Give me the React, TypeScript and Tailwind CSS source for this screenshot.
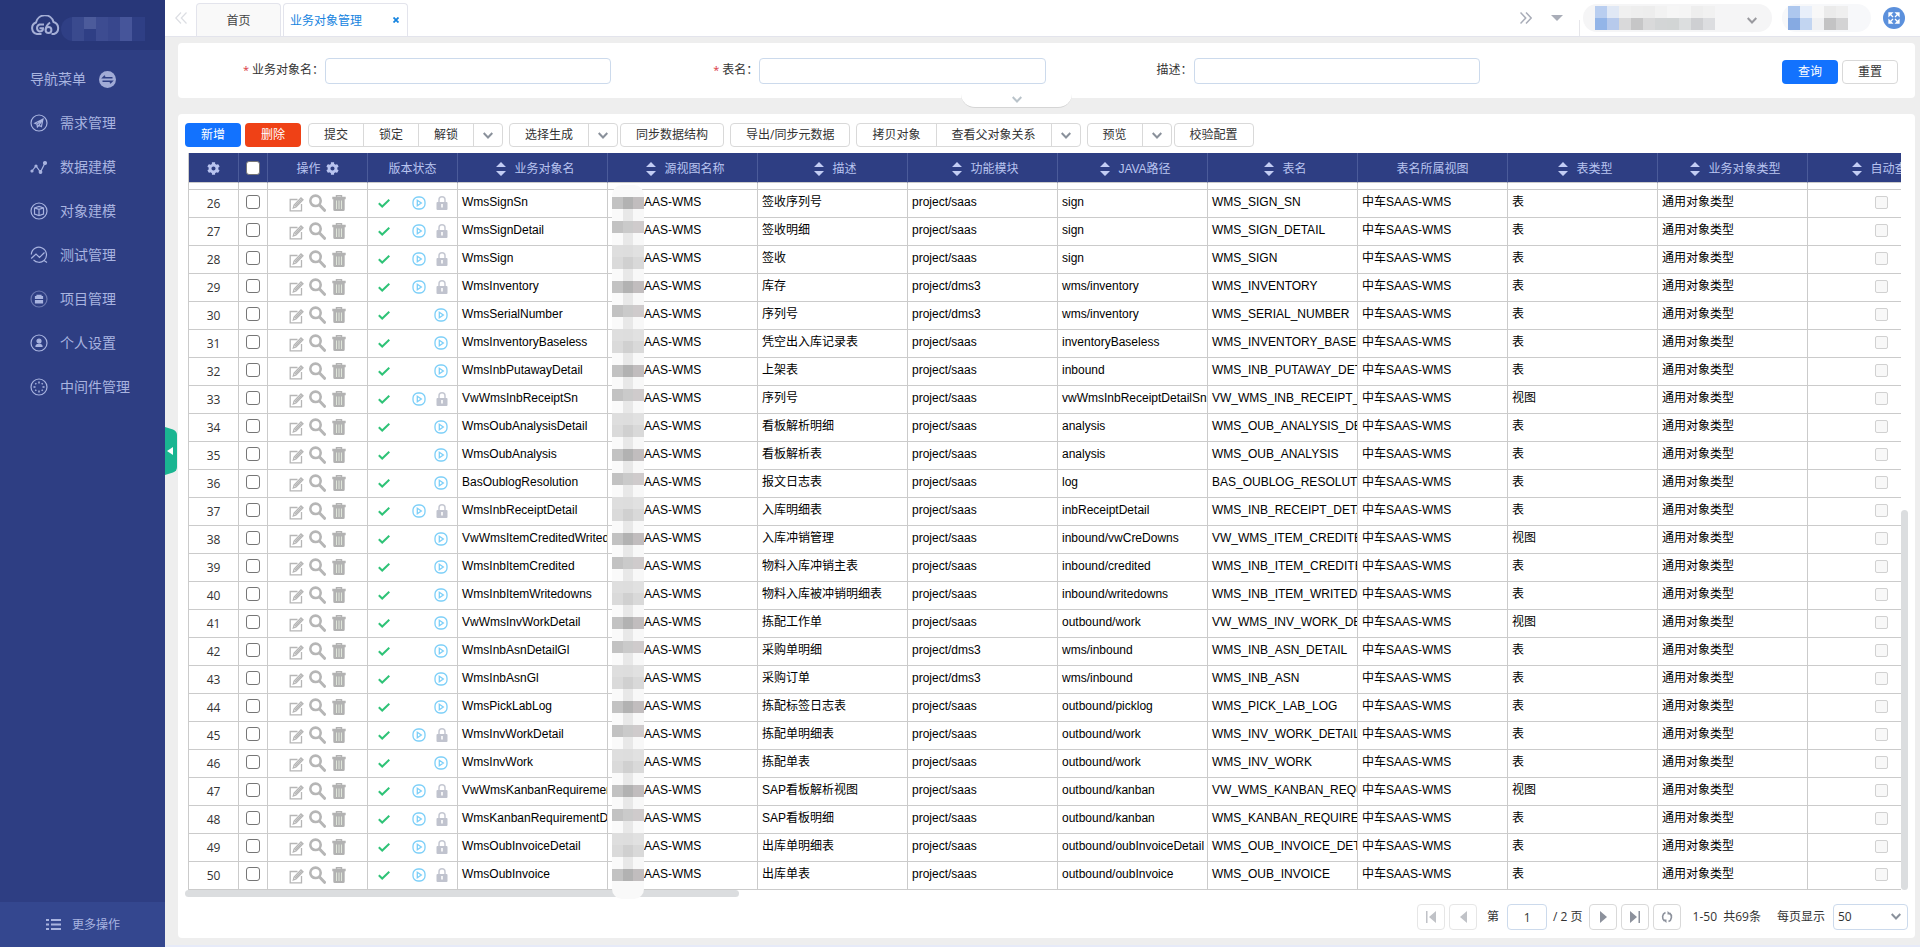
import React, { useState } from 'react';
import { FaCog } from 'react-icons/fa';

interface BizObject {
  no: number;
  name: string;
  desc: string;
  module: string;
  path: string;
  table: string;
  type: string;
  locked: boolean;
}

const raw: [string, string, string, string, string, string, boolean][] = [
  ['WmsSignSn', '签收序列号', 'project/saas', 'sign', 'WMS_SIGN_SN', '表', true],
  ['WmsSignDetail', '签收明细', 'project/saas', 'sign', 'WMS_SIGN_DETAIL', '表', true],
  ['WmsSign', '签收', 'project/saas', 'sign', 'WMS_SIGN', '表', true],
  ['WmsInventory', '库存', 'project/dms3', 'wms/inventory', 'WMS_INVENTORY', '表', true],
  ['WmsSerialNumber', '序列号', 'project/dms3', 'wms/inventory', 'WMS_SERIAL_NUMBER', '表', false],
  ['WmsInventoryBaseless', '凭空出入库记录表', 'project/saas', 'inventoryBaseless', 'WMS_INVENTORY_BASELESS', '表', false],
  ['WmsInbPutawayDetail', '上架表', 'project/saas', 'inbound', 'WMS_INB_PUTAWAY_DETAIL', '表', false],
  ['VwWmsInbReceiptSn', '序列号', 'project/saas', 'vwWmsInbReceiptDetailSn', 'VW_WMS_INB_RECEIPT_SN', '视图', true],
  ['WmsOubAnalysisDetail', '看板解析明细', 'project/saas', 'analysis', 'WMS_OUB_ANALYSIS_DETAIL', '表', false],
  ['WmsOubAnalysis', '看板解析表', 'project/saas', 'analysis', 'WMS_OUB_ANALYSIS', '表', false],
  ['BasOublogResolution', '报文日志表', 'project/saas', 'log', 'BAS_OUBLOG_RESOLUTION', '表', false],
  ['WmsInbReceiptDetail', '入库明细表', 'project/saas', 'inbReceiptDetail', 'WMS_INB_RECEIPT_DETAIL', '表', true],
  ['VwWmsItemCreditedWritedowns', '入库冲销管理', 'project/saas', 'inbound/vwCreDowns', 'VW_WMS_ITEM_CREDITED', '视图', false],
  ['WmsInbItemCredited', '物料入库冲销主表', 'project/saas', 'inbound/credited', 'WMS_INB_ITEM_CREDITED', '表', false],
  ['WmsInbItemWritedowns', '物料入库被冲销明细表', 'project/saas', 'inbound/writedowns', 'WMS_INB_ITEM_WRITEDOWNS', '表', false],
  ['VwWmsInvWorkDetail', '拣配工作单', 'project/saas', 'outbound/work', 'VW_WMS_INV_WORK_DETAIL', '视图', false],
  ['WmsInbAsnDetailGl', '采购单明细', 'project/dms3', 'wms/inbound', 'WMS_INB_ASN_DETAIL', '表', false],
  ['WmsInbAsnGl', '采购订单', 'project/dms3', 'wms/inbound', 'WMS_INB_ASN', '表', false],
  ['WmsPickLabLog', '拣配标签日志表', 'project/saas', 'outbound/picklog', 'WMS_PICK_LAB_LOG', '表', false],
  ['WmsInvWorkDetail', '拣配单明细表', 'project/saas', 'outbound/work', 'WMS_INV_WORK_DETAIL', '表', true],
  ['WmsInvWork', '拣配单表', 'project/saas', 'outbound/work', 'WMS_INV_WORK', '表', false],
  ['VwWmsKanbanRequirement', 'SAP看板解析视图', 'project/saas', 'outbound/kanban', 'VW_WMS_KANBAN_REQUIREMENT', '视图', true],
  ['WmsKanbanRequirementDetail', 'SAP看板明细', 'project/saas', 'outbound/kanban', 'WMS_KANBAN_REQUIREMENT', '表', true],
  ['WmsOubInvoiceDetail', '出库单明细表', 'project/saas', 'outbound/oubInvoiceDetail', 'WMS_OUB_INVOICE_DETAIL', '表', true],
  ['WmsOubInvoice', '出库单表', 'project/saas', 'outbound/oubInvoice', 'WMS_OUB_INVOICE', '表', true],
];

const rows: BizObject[] = raw.map(([name, desc, module, path, table, type, locked], i) => ({
  no: 26 + i, name, desc, module, path, table, type, locked,
}));

const columns = [
  { title: '业务对象名', sort: true },
  { title: '源视图名称', sort: true },
  { title: '描述', sort: true },
  { title: '功能模块', sort: true },
  { title: 'JAVA路径', sort: true },
  { title: '表名', sort: true },
  { title: '表名所属视图', sort: false },
  { title: '表类型', sort: true },
  { title: '业务对象类型', sort: true },
  { title: '自动查询', sort: true },
];

// Sidebar icons, all drawn on an 18x18 box
const ring = <circle cx="9" cy="9" r="8" />;
const menu = [
  { label: '需求管理', icon: <>{ring}<path d="M4.8 9.2 13 5l-1.6 7.6-2.6-1.3-1.4 1.6-.4-2.7zM7 10.2 13 5 8.8 11.3" /></> },
  { label: '数据建模', icon: <><path d="M2 13 6 8l4.5 6L15 5" /><circle cx="2" cy="13" r="1" fill="currentColor" /><circle cx="6" cy="8" r="1" fill="currentColor" /><circle cx="10.5" cy="14" r="1.3" fill="currentColor" /><circle cx="15" cy="5" r="1.5" fill="currentColor" /></> },
  { label: '对象建模', icon: <>{ring}<path d="M4.5 6 9 4.5 13.5 6v6L9 13.5 4.5 12zM4.5 6 9 7.3 13.5 6M9 7.3v6.2" /></> },
  { label: '测试管理', icon: <><path d="M1.3 8.5A7.6 7.6 0 1 1 14 14.500l3 2M14 14.500A7.600 7.600 0 0 1 3.500 13.800M1.200 12.500 6 8l3.500 3.500 5-5" /></> },
  { label: '项目管理', icon: <><circle cx="9" cy="9" r="8" opacity="0.5" /><path d="M5.500 8.500v-2h7v2zM5.500 10.700h7V13h-7zM7 6V5.300h4V6" fill="currentColor" /></> },
  { label: '个人设置', icon: <>{ring}<circle cx="9" cy="7" r="2" fill="currentColor" /><path d="M6 12.5c0-3 6-3 6 0z" fill="currentColor" /></> },
  { label: '中间件管理', icon: <>{ring}<path d="M9 3.500v2M9 12.500v2M3.500 9h2M12.500 9h2M5.300 5.300l1 1M11.700 11.700l1 1M5.300 12.700l1-1M11.700 6.300l1-1" strokeWidth="1.500" /></> },
];

// Masked customer prefix: seven 12px bands, three tiles each
const maskBands = [
  ['bg-[#c2c2c2]', 'bg-[#b2b2b2]', 'bg-[#c1bdbe]'],
  ['bg-[#fafafa]', 'bg-[#e8e8e8]', 'bg-[#f8f8f8]'],
  ['bg-[#c2c2c2]', 'bg-[#cacaca]', 'bg-[#cfcbcc]'],
  ['bg-[#fafafa]', 'bg-[#e8e8e8]', 'bg-[#f8f8f8]'],
  ['bg-[#dedede]', 'bg-[#dddddd]', 'bg-[#e1e1e1]'],
  ['bg-[#dadada]', 'bg-[#d0d0d0]', 'bg-[#d9d9d9]'],
  ['bg-[#fafafa]', 'bg-[#e8e8e8]', 'bg-[#f8f8f8]'],
];

const td = 'h-[28px] overflow-hidden whitespace-nowrap border-r border-b border-[#cbcbcb] pl-1 pb-[3px] leading-6';
const th = 'h-[30px] overflow-hidden whitespace-nowrap border-r border-b border-r-[#4b5b9a] border-b-[#cbcbcb] p-0 pt-[2px] font-normal';
const checkbox = 'block mx-auto size-[14px] appearance-none rounded-[3px] border border-[#767676] bg-white checked:bg-[#1677ff]';

function SortIcon() {
  return (
    <svg className="h-[14px] w-[10px]" viewBox="0 0 10 14" fill="#c3cdf4">
      <path d="M5 0 10 5H0zM0 9h10l-5 5z" />
    </svg>
  );
}

function Chevron({ className = 'text-[#8a919b]' }: { className?: string }) {
  return (
    <svg className={`h-[7px] w-[10px] ${className}`} viewBox="0 0 10 7" fill="none" stroke="currentColor" strokeWidth="2">
      <path d="M.7 1 5 5.5 9.3 1" />
    </svg>
  );
}

function EditIcon() {
  return (
    <svg className="mt-[3px] h-[15px] w-[15px]" viewBox="0 0 15 15" fill="none" stroke="#b6b6b6" strokeWidth="1.3">
      <path d="M8.5 2.5H1.2v11.3h11.3V7" />
      <path d="M4.300 11l.8-3L12 1l2 1.800L7 10z" />
      <path d="M6 9.200 12.800 2.200" />
    </svg>
  );
}

function SearchIcon() {
  return (
    <svg className="h-[18px] w-[17px]" viewBox="0 0 17 18" fill="none" stroke="#b6b6b6">
      <circle cx="6.5" cy="6.8" r="5.2" strokeWidth="2.6" />
      <path d="m10.5 11 5 5.3" strokeWidth="3" strokeLinecap="round" />
    </svg>
  );
}

function TrashIcon() {
  return (
    <svg className="h-[16px] w-[14px]" viewBox="0 0 14 16">
      <path d="M4.5 2V.8h5V2" fill="none" stroke="#b2b2b2" strokeWidth="1.4" />
      <path d="M.3 1.8h13.4v2.4H.3zM1.3 4.2h11.4v10.300q0 1.500-1.500 1.500H2.800q-1.500 0-1.500-1.500z" fill="#b2b2b2" />
      <path d="M4.500 5.5V14M7 5.5V14M9.500 5.5V14" stroke="#dfe6da" strokeWidth="1" />
    </svg>
  );
}

function PlayIcon() {
  return (
    <svg className="size-[14px]" viewBox="0 0 14 14" fill="none" stroke="#7ccff8" strokeWidth="1.3">
      <rect x="1" y="1" width="12" height="12" rx="5" />
      <path d="M5.3 4.3 9.3 7l-4 2.7z" />
    </svg>
  );
}

function LockIcon() {
  return (
    <svg className="h-[14px] w-[12px]" viewBox="0 0 12 14">
      <path d="M3 6V3.8a3 3 0 0 1 6 0V6" fill="none" stroke="#c5c8d2" strokeWidth="1.5" />
      <rect x=".5" y="6" width="11" height="8" rx="1" fill="#c0c3ce" />
      <path d="M6 8v3.5" stroke="#fff" strokeWidth="1.6" />
    </svg>
  );
}

function Sidebar() {
  return (
    <aside className="relative flex w-[165px] shrink-0 flex-col bg-[#2e3e83] text-sm text-[#a9b4e0]">
      <div className="flex h-[50px] items-center bg-[#283779] pl-[30px]">
        <svg className="h-[21px] w-[31px] text-[#a5afd6]" viewBox="0 0 31 21" fill="none" stroke="currentColor" strokeWidth="2">
          <path d="M11.5 19H7A6 6 0 0 1 6 7.500 9 9 0 0 1 23.500 7 6.300 6.300 0 0 1 24 19h-2.500" />
          <path d="M14 9.500H9.500a3.700 3.700 0 0 0 0 7c2 0 3.500-.8 3.500-3.300h-3.500" />
          <path d="M20 7.500q-4 3-4.300 7" />
          <circle cx="18.500" cy="15" r="2.900" />
        </svg>
        <div className="mt-2 flex h-6 w-[84px] overflow-hidden rounded-l-full bg-[#2f3f85]">
          <span className="ml-[11px] h-full w-3 bg-[#3a4a8e]" />
          <span className="h-3 w-3 bg-[#4c5b9b]" />
          <span className="h-full w-3 bg-[#3d4c91]" />
          <span className="h-full w-3 bg-[#38478d]" />
          <span className="h-full w-3 bg-[#46559a]" />
        </div>
      </div>
      <div className="flex h-[58px] items-center gap-[13px] pl-[30px]">
        <span>导航菜单</span>
        <svg className="size-[17px]" viewBox="0 0 17 17">
          <circle cx="8.5" cy="8.5" r="8.5" fill="#a1abd6" />
          <path d="M13.5 6.8H4L6 4.8M3.5 10.2H13l-2 2" stroke="#2e3e83" strokeWidth="1.5" fill="none" />
        </svg>
      </div>
      <nav className="-mt-[7px] flex-1">
        {menu.map((item) => (
          <a key={item.label} href="#" className="flex h-11 items-center gap-3 pl-[30px]">
            <svg className="size-[18px]" viewBox="0 0 18 18" fill="none" stroke="currentColor" strokeWidth="1.2">
              {item.icon}
            </svg>
            <span>{item.label}</span>
          </a>
        ))}
      </nav>
      <button className="flex h-[45px] items-center gap-[11px] bg-[#34478f] pl-[46px] text-xs">
        <svg className="h-[11px] w-[15px]" viewBox="0 0 15 11" fill="#a9b4e0">
          <path d="M0 0h3v2H0zM5 0h10v2H5zM0 4.5h3v2H0zM5 4.5h10v2H5zM0 9h3v2H0zM5 9h10v2H5z" />
        </svg>
        更多操作
      </button>
      <button aria-label="收起菜单" className="absolute top-[427px] left-full z-10 h-12 w-3">
        <svg className="h-12 w-3" viewBox="0 0 12 48">
          <path d="M0 0 8 2.5Q12 4 12 8v32q0 4-4 5.5L0 48z" fill="#1ab591" />
          <path d="M8 20v8l-6-4z" fill="#fff" />
        </svg>
      </button>
    </aside>
  );
}

function TopBar() {
  return (
    <header className="flex h-[37px] shrink-0 items-end border-b border-[#e3e4ec] bg-white text-xs">
      <svg className="mb-3 ml-[10px] h-3 w-3" viewBox="0 0 12 12" fill="none" stroke="#dcdee3" strokeWidth="1.2">
        <path d="M6 .5.8 6 6 11.5M11.5.5 6.3 6l5.200 5.5" />
      </svg>
      <button className="ml-[9px] h-[33px] w-[85px] rounded-t border border-b-0 border-[#e3e4ec] bg-[#f9f9f9] pt-px text-[#444]">首页</button>
      <div className="ml-[2px] flex h-[33px] w-[125px] items-center justify-between rounded-t border border-b-0 border-[#e3e4ec] pr-2 pl-[6px] text-[#1684e0]">
        <span className="pt-px">业务对象管理</span>
        <button aria-label="关闭">
          <svg className="size-[6px]" viewBox="0 0 6 6" stroke="#1684e0" strokeWidth="1.8"><path d="m.5.5 5 5m0-5-5 5" /></svg>
        </button>
      </div>
      <div className="ml-auto flex h-full items-center pr-[15px]">
        <svg className="h-3 w-3" viewBox="0 0 12 12" fill="none" stroke="#a9adb8" strokeWidth="1.5">
          <path d="M.5.5 5.700 6 .5 11.5M6 .5 11.200 6 6 11.5" />
        </svg>
        <svg className="ml-[19px] h-[6px] w-3" viewBox="0 0 12 6" fill="#a9adb8"><path d="M0 0h12L6 6z" /></svg>
        <span className="ml-4 h-4 w-px self-end bg-[#e6e6ea]" />
        <div className="ml-[3px] flex h-[28px] w-[189px] items-center rounded-full bg-[#f5f5f6] pl-3">
          <div className="grid grid-cols-[repeat(10,12px)] grid-rows-[12px_12px]">
            <span className="bg-[#b9cef0]" /><span className="bg-[#e0e8f5]" /><span className="bg-[#f0f0f0]" /><span className="bg-[#eeeeee]" /><span className="bg-[#ededed]" /><span className="bg-[#f2f2f2]" /><span className="bg-[#f6f6f6]" /><span className="bg-[#f5f5f5]" /><span className="bg-[#eeeeee]" /><span className="bg-[#f1f1f1]" />
            <span className="bg-[#93b5e8]" /><span className="bg-[#b7caec]" /><span className="bg-[#d9d9da]" /><span className="bg-[#c6c6c7]" /><span className="bg-[#d9d9da]" /><span className="bg-[#d3d5d6]" /><span className="bg-[#d2d5d5]" /><span className="bg-[#dcdedf]" /><span className="bg-[#cecfd2]" /><span className="bg-[#dcdde0]" />
          </div>
          <Chevron className="mt-1 ml-[32px] text-[#9a9a9f]" />
        </div>
        <div className="ml-[10px] flex h-7 w-[89px] items-center rounded-full bg-[#f7f8fa] pl-[6px]">
          <div className="grid grid-cols-[repeat(5,12px)] grid-rows-[12px_12px]">
            <span className="bg-[#adc7ee]" /><span className="bg-[#e8effa]" /><span className="bg-[#f8f8f8]" /><span className="bg-[#ebebeb]" /><span className="bg-[#efefef]" />
            <span className="bg-[#86aae2]" /><span className="bg-[#c2d5f1]" /><span className="bg-[#f0f1f3]" /><span className="bg-[#c3c3c4]" /><span className="bg-[#d3d3d4]" />
          </div>
        </div>
        <button aria-label="全屏" className="ml-3 flex size-[22px] items-center justify-center rounded-full bg-[#5b90dc]">
          <svg className="size-3" viewBox="0 0 12 12" fill="#fff" stroke="#fff" strokeWidth="1.3">
            <path d="M1 1h3L1 4zM11 1v3L8 1zM1 11V8l3 3zM11 11H8l3-3z" />
            <path d="m2 2 3 3m5-3L7 5M2 10l3-3m5 3L7 7" />
          </svg>
        </button>
      </div>
    </header>
  );
}

function SearchForm() {
  const fields = [
    { id: 'objName', label: '业务对象名', required: true },
    { id: 'tableName', label: '表名', required: true },
    { id: 'desc', label: '描述', required: false },
  ];
  return (
    <form className="relative flex h-[55px] shrink-0 items-start rounded bg-white pt-[15px] text-xs text-[#333]">
      {fields.map((f) => (
        <div key={f.id} className="flex w-1/4 items-center pr-px">
          <label htmlFor={f.id} className="w-[147px] shrink-0 pr-px pb-[3px] text-right">
            {f.required && <span className="mr-[3px] text-[11px] text-[#d9363e]">*</span>}
            {f.label}：
          </label>
          <input id={f.id} className="h-[26px] min-w-0 flex-1 rounded border border-[#ccdaec] px-2 outline-none" />
        </div>
      ))}
      <div className="mt-[2px] mr-[17px] ml-auto flex gap-1">
        <button type="button" className="h-6 w-14 rounded bg-[#1272fe] text-white">查询</button>
        <button type="button" className="h-6 w-14 rounded border border-[#d9d9d9] bg-white">重置</button>
      </div>
      <button type="button" aria-label="展开" className="absolute top-[49px] left-[783px] flex h-4 w-[111px] items-start justify-center rounded-b-[14px] border-b border-[#d5d5d5] bg-white pt-1">
        <Chevron className="text-[#b9c3ca]" />
      </button>
    </form>
  );
}

function ButtonGroup({ items, arrow }: { items: string[]; arrow?: boolean }) {
  return (
    <div className="flex h-6 divide-x divide-[#d9d9d9] overflow-hidden rounded border border-[#d9d9d9] bg-white">
      {items.map((t) => (
        <button key={t} className="px-[15px] whitespace-nowrap">{t}</button>
      ))}
      {arrow && (
        <button aria-label="更多" className="flex w-[28px] items-center justify-center">
          <Chevron />
        </button>
      )}
    </div>
  );
}

function Toolbar() {
  return (
    <div className="flex items-center gap-[6px] pt-[9px] pl-[7px] text-xs text-[#333]">
      <div className="mr-px flex gap-1">
        <button className="h-6 w-14 rounded bg-[#1272fe] text-white">新增</button>
        <button className="h-6 w-14 rounded bg-[#ef4116] text-white">删除</button>
      </div>
      <ButtonGroup items={['提交', '锁定', '解锁']} arrow />
      <div className="flex gap-[2px]">
        <ButtonGroup items={['选择生成']} arrow />
        <ButtonGroup items={['同步数据结构']} />
      </div>
      <ButtonGroup items={['导出/同步元数据']} />
      <ButtonGroup items={['拷贝对象', '查看父对象关系']} arrow />
      <div className="flex gap-[2px]">
        <ButtonGroup items={['预览']} arrow />
        <ButtonGroup items={['校验配置']} />
      </div>
    </div>
  );
}

function DataTable() {
  const [selected, setSelected] = useState<number[]>([]);
  const toggle = (no: number) =>
    setSelected((s) => (s.includes(no) ? s.filter((n) => n !== no) : [...s, no]));

  return (
    <div className="relative mt-[6px] pl-[10px]">
      <div className="flex pr-[7px]">
        <div className="min-w-0 flex-1 overflow-hidden">
          <table className="w-[1770px] table-fixed border-separate border-spacing-0 border-l border-[#cbcbcb] font-['Liberation_Sans','Noto_Sans_CJK_SC',sans-serif] text-xs text-black">
            <colgroup>
              <col className="w-[50px]" />
              <col className="w-[29px]" />
              <col className="w-[100px]" />
              <col className="w-[90px]" />
              {columns.map((c) => <col key={c.title} className="w-[150px]" />)}
            </colgroup>
            <thead className="bg-[#2e3e83] text-[#b9c4f0]">
              <tr>
                <th className={th}><FaCog className="mx-auto size-[13px]" /></th>
                <th className="h-[30px] border-r border-b border-r-[#4b5b9a] border-b-[#cbcbcb] p-0">
                  <input
                    type="checkbox"
                    aria-label="全选"
                    className={checkbox}
                    checked={selected.length === rows.length}
                    onChange={(e) => setSelected(e.target.checked ? rows.map((r) => r.no) : [])}
                  />
                </th>
                <th className={th}>
                  <div className="flex items-center justify-center gap-[5px]">操作<FaCog className="size-[13px]" /></div>
                </th>
                <th className={th}>版本状态</th>
                {columns.map((c) => (
                  <th key={c.title} className={th}>
                    {c.sort ? (
                      <div className="flex items-center justify-center gap-2 pl-[6px]"><SortIcon />{c.title}</div>
                    ) : c.title}
                  </th>
                ))}
              </tr>
            </thead>
            <tbody>
              {/* tail of the row scrolled under the header */}
              <tr aria-hidden="true">
                {Array.from({ length: 14 }, (_, i) => (
                  <td key={i} className="h-[7px] border-r border-b border-[#cbcbcb] p-0" />
                ))}
              </tr>
              {rows.map((r) => (
                <tr key={r.no}>
                  <td className="border-r border-b border-[#cbcbcb] p-0 pt-px text-center font-['Open_Sans',sans-serif] leading-[26px] text-[#333]">{r.no}</td>
                  <td className="border-r border-b border-[#cbcbcb] p-0 pb-[3px]">
                    <input type="checkbox" aria-label={r.name} className={checkbox} checked={selected.includes(r.no)} onChange={() => toggle(r.no)} />
                  </td>
                  <td className="border-r border-b border-[#cbcbcb] p-0 pb-[2px]">
                    <div className="flex items-center pl-[21px]">
                      <button aria-label="编辑"><EditIcon /></button>
                      <button aria-label="查看" className="ml-[5px]"><SearchIcon /></button>
                      <button aria-label="删除" className="ml-[6px]"><TrashIcon /></button>
                    </div>
                  </td>
                  <td className="border-r border-b border-[#cbcbcb] p-0 pb-px">
                    <div className="flex items-center pr-[9px] pl-[10px]">
                      <svg className="h-[9px] w-3" viewBox="0 0 12 9" fill="none" stroke="#2fc377" strokeWidth="2">
                        <path d="M.8 4.2 4.2 7.5 11.3.8" />
                      </svg>
                      <div className="ml-auto flex items-center gap-[10px]">
                        <PlayIcon />
                        {r.locked && <LockIcon />}
                      </div>
                    </div>
                  </td>
                  <td className={td}>{r.name}</td>
                  <td className="overflow-hidden border-r border-b border-[#cbcbcb] p-0 pb-[3px] pl-9 leading-6">AAS-WMS</td>
                  <td className={td}>{r.desc}</td>
                  <td className={td}>{r.module}</td>
                  <td className={td}>{r.path}</td>
                  <td className={td}>{r.table}</td>
                  <td className={td}>中车SAAS-WMS</td>
                  <td className={td}>{r.type}</td>
                  <td className={td}>通用对象类型</td>
                  <td className="border-r border-b border-[#cbcbcb] p-0 pr-[3px] pb-[3px]">
                    <input type="checkbox" disabled aria-label="自动查询" className="mx-auto block size-[13px] appearance-none rounded-[2px] border border-[#d1d1d1] bg-[#f8f8f8]" />
                  </td>
                </tr>
              ))}
            </tbody>
          </table>
        </div>
        <div className="flex w-[7px] flex-col justify-end">
          <div className="h-[380px] rounded-full bg-[#dbdddf]" />
        </div>
      </div>
      <div className="-ml-[3px] h-[7px] w-[554px] rounded-full bg-[#dbdddf]" />
      {/* privacy mask over the customer prefix */}
      <div className="pointer-events-none absolute top-8 left-[434px] w-8 overflow-hidden rounded-[10px] bg-[#f9f9f9] pt-3">
        {Array.from({ length: 57 }, (_, i) => (
          <div key={i} className="flex h-3">
            {maskBands[i % 7].map((c, j) => <span key={j} className={`${c} flex-1`} />)}
          </div>
        ))}
        <div className="h-[18px]" />
      </div>
    </div>
  );
}

function PageButton({ label, dim, children }: { label: string; dim?: boolean; children: React.ReactNode }) {
  return (
    <button
      aria-label={label}
      className={`flex h-[26px] w-7 items-center justify-center rounded border bg-white ${dim ? 'border-[#e6e6e6] text-[#c0c2c7]' : 'border-[#d9d9d9] text-[#8c919c]'}`}
    >
      <svg className="h-3 w-3" viewBox="0 0 12 12" fill="currentColor">{children}</svg>
    </button>
  );
}

function Pagination() {
  return (
    <div className="mt-[7px] flex items-center justify-end gap-1 pr-[7px] text-xs text-[#333]">
      <PageButton label="首页" dim><path d="M1 0h1.500v12H1zM11 0v12L4 6z" /></PageButton>
      <PageButton label="上一页" dim><path d="M10 0v12L3 6z" /></PageButton>
      <label htmlFor="page" className="mr-1 ml-[6px]">第</label>
      <input id="page" defaultValue="1" className="h-[26px] w-10 rounded border border-[#ccdaec] text-center outline-none" />
      <span className="mx-[2px]">/ 2 页</span>
      <PageButton label="下一页"><path d="M3 0v12l7-6z" /></PageButton>
      <PageButton label="末页"><path d="M1 0v12l7-6zM9.500 0H11v12H9.500z" /></PageButton>
      <PageButton label="刷新">
        <path d="M4.500 1.500A5 5 0 0 0 3.500 10M7.500 10.500A5 5 0 0 0 8.500 2" fill="none" stroke="currentColor" strokeWidth="1.6" />
        <path d="M1.500 8.500h4V12zM10.500 3.500h-4V0z" />
      </PageButton>
      <span className="ml-2 whitespace-pre">1-50  共69条</span>
      <label htmlFor="pageSize" className="ml-3">每页显示</label>
      <div className="relative ml-1">
        <select id="pageSize" className="h-[26px] w-[75px] appearance-none rounded border border-[#ccdaec] bg-white pl-1 outline-none">
          <option>50</option>
          <option>100</option>
        </select>
        <span className="pointer-events-none absolute top-[9px] right-[7px] flex"><Chevron /></span>
      </div>
    </div>
  );
}

export default function App() {
  return (
    <div className="flex h-screen overflow-hidden bg-[#eeeeee] font-['Open_Sans','Noto_Sans_CJK_SC',sans-serif]">
      <Sidebar />
      <div className="flex min-w-0 flex-1 flex-col">
        <TopBar />
        <main className="flex min-h-0 flex-1 flex-col gap-4 border-b-2 border-[#e6eaf8] pt-[6px] pr-[5px] pb-[7px] pl-[13px]">
          <SearchForm />
          <section className="min-h-0 flex-1 rounded bg-white">
            <Toolbar />
            <DataTable />
            <Pagination />
          </section>
        </main>
      </div>
    </div>
  );
}
